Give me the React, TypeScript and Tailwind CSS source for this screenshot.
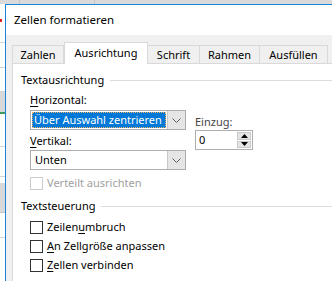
import React from 'react'

const FONT = "font-['Segoe_UI','Noto_Sans',sans-serif]"

function Chevron() {
  return (
    <svg width="9" height="5" viewBox="0 0 9 5" className="block">
      <path d="M0.5 0.5 L4.5 4.5 L8.5 0.5" fill="none" stroke="#606060" strokeWidth="1" />
    </svg>
  )
}

function Combo({ children, selected }: { children: React.ReactNode; selected?: boolean }) {
  return (
    <div className="flex h-[20px] border border-[#adadad] bg-white">
      <div className="flex-1 p-[1px] flex min-w-0">
        {selected ? (
          <div className="flex-1 flex items-center whitespace-nowrap bg-[#0078d7] text-white pl-[2px] outline outline-1 outline-dotted outline-[#f2b567] -outline-offset-1">
            {children}
          </div>
        ) : (
          <div className="flex-1 flex items-center whitespace-nowrap pl-[3px]">{children}</div>
        )}
      </div>
      <div className="w-[18px] flex items-center justify-center bg-[#e5e5e5] border-l border-[#c8c8c8]">
        <Chevron />
      </div>
    </div>
  )
}

function Check({ children, disabled }: { children: React.ReactNode; disabled?: boolean }) {
  return (
    <div className="flex items-center h-[16px]">
      <div
        className={
          'w-[13px] h-[13px] bg-white border ' +
          (disabled ? 'border-[#cccccc]' : 'border-[#333333]')
        }
      />
      <span className={'ml-[4px] leading-[16px] ' + (disabled ? 'text-[#a0a0a0]' : 'text-black')}>
        {children}
      </span>
    </div>
  )
}

function Group({ title }: { title: string }) {
  return (
    <div className="flex items-center h-[16px] pl-[8px]">
      <span className="leading-[16px]">{title}</span>
      <div className="flex-1 h-px bg-[#dcdcdc] ml-[6px]" />
    </div>
  )
}

function Spin() {
  return (
    <div className="flex h-[20px] w-[58px] border border-[#adadad] bg-white">
      <div className="flex-1 flex items-center pl-[3px]">0</div>
      <div className="w-[16px] flex flex-col p-[1px] gap-[1px]">
        <div className="flex-1 bg-[#e5e5e5] border border-[#c8c8c8] flex items-center justify-center">
          <svg width="7" height="4" viewBox="0 0 7 4"><path d="M0 4 L3.5 0 L7 4 Z" fill="#000" /></svg>
        </div>
        <div className="flex-1 bg-[#e5e5e5] border border-[#c8c8c8] flex items-center justify-center">
          <svg width="7" height="4" viewBox="0 0 7 4"><path d="M0 0 L3.5 4 L7 0 Z" fill="#000" /></svg>
        </div>
      </div>
    </div>
  )
}

const TABS = ['Zahlen', 'Ausrichtung', 'Schrift', 'Rahmen', 'Ausfüllen']
const TAB_W = [52, 84, 52, 60, 68]

export default function App() {
  return (
    <div className={`w-[332px] h-[281px] overflow-hidden flex flex-col bg-white text-[11px] text-black ${FONT}`}>
      {/* excel column header strip */}
      <div className="h-[4px] flex bg-[#dadada]">
        <div className="w-[20px] border-r border-[#c4c4c4]" />
        <div className="w-[75px] border-r border-[#c4c4c4]" />
        <div className="flex-1" />
      </div>
      <div className="flex flex-1">
        {/* excel sheet behind */}
        <div className="w-[5px] flex flex-col bg-white">
          <div className="h-[15px]" />
          <div className="h-[3px] w-[2px] bg-[#e02020]" />
          <div className="h-[21px] border-b border-[#d4d4d4]" />
          <div className="h-[25px] border-b border-[#d4d4d4]" />
          <div className="h-[24px] border-b border-[#d4d4d4]" />
          <div className="h-[20px] bg-[#d9d9d9]" />
          <div className="h-[2px] bg-[#3c9a5c]" />
          <div className="h-[33px] border-b border-[#d4d4d4]" />
          <div className="h-[30px] border-b border-[#d4d4d4]" />
          <div className="h-[6px]" />
          <div className="h-[30px] bg-[#d9d9d9] border-b border-[#c4c4c4]" />
          <div className="h-[25px] border-b border-[#d4d4d4]" />
          <div className="flex-1" />
        </div>

        {/* dialog */}
        <div className="flex-1 flex flex-col border-l border-t border-[#1883d7]">
          <div className="h-[30px] bg-white flex items-center pl-[8px] text-[11.5px]">Zellen formatieren</div>
          <div className="flex-1 flex flex-col bg-[#f0f0f0] pt-[7px] pl-[6px]">
            <div className="flex items-end h-[21px]">
              {TABS.map((t, i) =>
                i === 1 ? (
                  <div
                    key={t}
                    className="h-[22px] -mb-px relative z-10 bg-white border-t border-x border-[#d9d9d9] flex items-center justify-center"
                    style={{ width: TAB_W[i] }}
                  >
                    {t}
                  </div>
                ) : (
                  <div
                    key={t}
                    className="h-[18px] border-t border-r border-[#d9d9d9] first:border-l flex items-center justify-center pt-[1px]"
                    style={{ width: TAB_W[i] }}
                  >
                    {t}
                  </div>
                ),
              )}
            </div>
            <div className="flex-1 bg-white border-l border-t border-[#d9d9d9] flex flex-col pt-[8px]">
              <Group title="Textausrichtung" />
              <div className="flex pl-[17px] mt-[4px]">
                <div className="w-[156px] flex flex-col">
                  <div className="h-[16px] leading-[16px]">
                    <u className="underline-offset-2">H</u>orizontal:
                  </div>
                  <div className="mt-[2px]">
                    <Combo selected>Über Auswahl zentrieren</Combo>
                  </div>
                  <div className="h-[16px] leading-[16px] mt-[3px]">
                    <u className="underline-offset-2">V</u>ertikal:
                  </div>
                  <div className="mt-[1px]">
                    <Combo>Unten</Combo>
                  </div>
                </div>
                <div className="ml-[9px] pt-[22px] flex flex-col">
                  <div className="h-[16px] leading-[16px] text-[#444]">Einzug:</div>
                  <Spin />
                </div>
              </div>
              <div className="pl-[17px] mt-[5px]">
                <Check disabled>Verteilt ausrichten</Check>
              </div>
              <div className="mt-[7px]">
                <Group title="Textsteuerung" />
              </div>
              <div className="pl-[17px] mt-[5px] flex flex-col gap-[3px]">
                <Check>
                  Zeilen<u className="underline-offset-2">u</u>mbruch
                </Check>
                <Check>
                  <u className="underline-offset-2">A</u>n Zellgröße anpassen
                </Check>
                <Check>
                  <u className="underline-offset-2">Z</u>ellen verbinden
                </Check>
              </div>
            </div>
          </div>
        </div>
      </div>
    </div>
  )
}
